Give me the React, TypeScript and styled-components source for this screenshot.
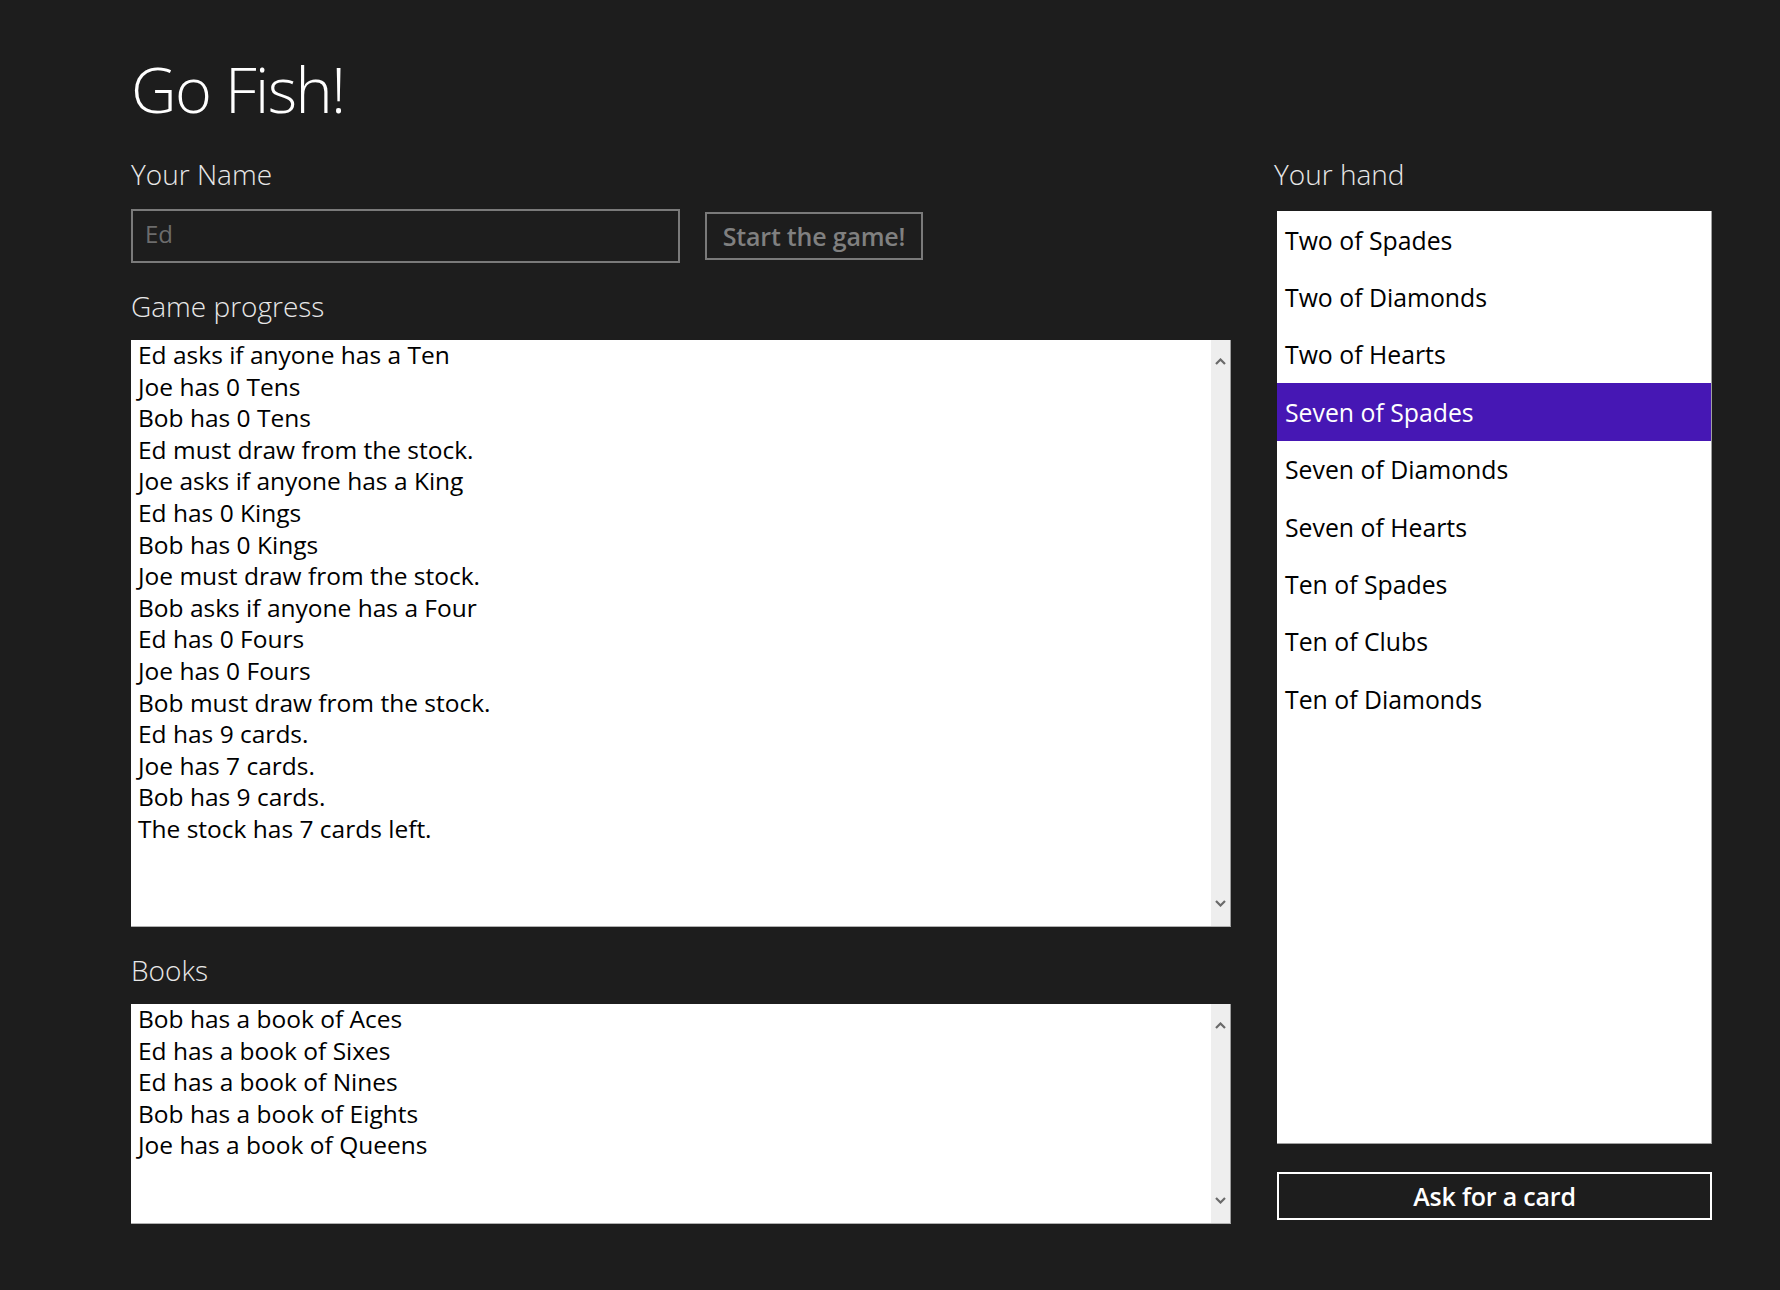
import React from "react";
import styled, { createGlobalStyle } from "styled-components";

const GlobalStyle = createGlobalStyle`
  html, body {
    margin: 0;
    padding: 0;
    background: #1d1d1d;
  }
  body {
    font-family: "Open Sans", "Noto Sans", sans-serif;
  }
  * { box-sizing: border-box; }
`;

const Page = styled.div`
  width: 1780px;
  height: 1290px;
  padding: 40px 68px 0 131px;
  display: flex;
  flex-direction: column;
  background: #1d1d1d;
`;

const Title = styled.h1`
  margin: 0;
  font-family: "Open Sans", "Noto Sans", sans-serif;
  font-weight: 300;
  font-size: 63px;
  letter-spacing: -1.6px;
  line-height: 95px;
  padding-top: 1px;
  height: 95px;
  color: #ffffff;
`;

const Columns = styled.div`
  margin-top: 20px;
  display: grid;
  grid-template-columns: 1100px 435px;
  column-gap: 46px;
`;

const Column = styled.div`
  display: flex;
  flex-direction: column;
`;

const Label = styled.div<{ $gap?: number; $shift?: number }>`
  margin-top: ${(p) => p.$gap ?? 0}px;
  margin-left: ${(p) => p.$shift ?? 0}px;
  font-weight: 300;
  font-size: 28px;
  line-height: 38px;
  color: #e8e8e8;
`;

const NameRow = styled.div`
  margin-top: 16px;
  height: 54px;
  display: flex;
  align-items: center;
  gap: 25px;
`;

const NameInput = styled.div`
  width: 549px;
  height: 54px;
  border: 2px solid #7a7a7a;
  padding: 0 0 6px 12px;
  display: flex;
  align-items: center;
  font-size: 24px;
  color: #6c6c6c;
`;

const OutlineButton = styled.div<{ $light?: boolean; $wide?: boolean }>`
  height: 48px;
  width: ${(p) => (p.$wide ? "100%" : "218px")};
  border: 2px solid ${(p) => (p.$light ? "#ffffff" : "#7a7a7a")};
  color: ${(p) => (p.$light ? "#ffffff" : "#808080")};
  display: flex;
  align-items: center;
  justify-content: center;
  font-weight: 600;
  font-size: 25px;
  letter-spacing: -0.2px;
  padding-bottom: 1px;
`;

const ScrollBox = styled.div<{ $h: number }>`
  margin-top: 15px;
  height: ${(p) => p.$h}px;
  background: #ffffff;
  border-right: 1px solid #9c9c9c;
  border-bottom: 1px solid #b0b0b0;
  display: flex;
`;

const Lines = styled.div`
  flex: 1;
  padding: 0 7px;
  margin-top: -1px;
  font-size: 24.5px;
  line-height: 31.6px;
  color: #000000;
`;

const ScrollBar = styled.div`
  width: 19px;
  background: #eeeeee;
  display: flex;
  flex-direction: column;
  justify-content: space-between;
  align-items: center;
  padding: 18px 0 19px;
`;

const HandList = styled.div`
  margin-top: 18px;
  height: 933px;
  background: #ffffff;
  border-right: 1px solid #a0a0a0;
  border-bottom: 1px solid #a0a0a0;
  display: flex;
  flex-direction: column;
`;

const HandItem = styled.div<{ $selected?: boolean }>`
  height: 57.4px;
  flex-shrink: 0;
  padding-left: 8px;
  display: flex;
  align-items: center;
  font-size: 24.8px;
  color: ${(p) => (p.$selected ? "#ffffff" : "#000000")};
  background: ${(p) => (p.$selected ? "#4617b4" : "transparent")};
`;

const AskWrap = styled.div`
  margin-top: 28px;
`;

const Chevron = ({ up }: { up?: boolean }) => (
  <svg width="11" height="7" viewBox="0 0 11 7">
    <polyline
      points={up ? "1,6 5.5,1.5 10,6" : "1,1 5.5,5.5 10,1"}
      fill="none"
      stroke="#6a6a6a"
      strokeWidth="2.2"
    />
  </svg>
);

const progress = [
  "Ed asks if anyone has a Ten",
  "Joe has 0 Tens",
  "Bob has 0 Tens",
  "Ed must draw from the stock.",
  "Joe asks if anyone has a King",
  "Ed has 0 Kings",
  "Bob has 0 Kings",
  "Joe must draw from the stock.",
  "Bob asks if anyone has a Four",
  "Ed has 0 Fours",
  "Joe has 0 Fours",
  "Bob must draw from the stock.",
  "Ed has 9 cards.",
  "Joe has 7 cards.",
  "Bob has 9 cards.",
  "The stock has 7 cards left.",
];

const books = [
  "Bob has a book of Aces",
  "Ed has a book of Sixes",
  "Ed has a book of Nines",
  "Bob has a book of Eights",
  "Joe has a book of Queens",
];

const hand = [
  "Two of Spades",
  "Two of Diamonds",
  "Two of Hearts",
  "Seven of Spades",
  "Seven of Diamonds",
  "Seven of Hearts",
  "Ten of Spades",
  "Ten of Clubs",
  "Ten of Diamonds",
];

export default function App() {
  return (
    <>
      <GlobalStyle />
      <Page>
        <Title>Go Fish!</Title>
        <Columns>
          <Column>
            <Label>Your Name</Label>
            <NameRow>
              <NameInput>Ed</NameInput>
              <OutlineButton>Start the game!</OutlineButton>
            </NameRow>
            <Label $gap={24}>Game progress</Label>
            <ScrollBox $h={587}>
              <Lines>
                {progress.map((l, i) => (
                  <div key={i}>{l}</div>
                ))}
              </Lines>
              <ScrollBar>
                <Chevron up />
                <Chevron />
              </ScrollBar>
            </ScrollBox>
            <Label $gap={24}>Books</Label>
            <ScrollBox $h={220}>
              <Lines>
                {books.map((l, i) => (
                  <div key={i}>{l}</div>
                ))}
              </Lines>
              <ScrollBar>
                <Chevron up />
                <Chevron />
              </ScrollBar>
            </ScrollBox>
          </Column>
          <Column>
            <Label $shift={-3}>Your hand</Label>
            <HandList>
              {hand.map((c, i) => (
                <HandItem key={c} $selected={i === 3}>
                  {c}
                </HandItem>
              ))}
            </HandList>
            <AskWrap>
              <OutlineButton $light $wide>
                Ask for a card
              </OutlineButton>
            </AskWrap>
          </Column>
        </Columns>
      </Page>
    </>
  );
}
